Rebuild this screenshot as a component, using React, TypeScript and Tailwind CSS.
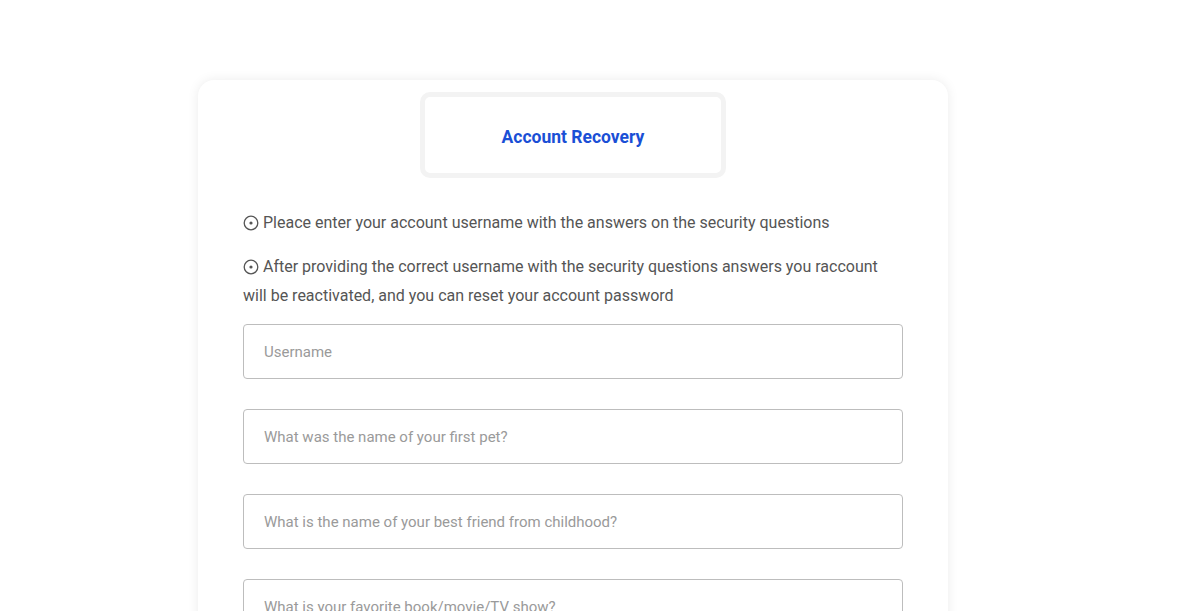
import React from 'react';

const InfoIcon = () => (
  <svg viewBox="0 0 16 16" className="inline-block w-[16px] h-[16px] mr-[4px] -mt-[2px] align-middle" fill="none" stroke="currentColor" strokeWidth="1.3">
    <circle cx="8" cy="8" r="6.8" />
    <circle cx="8" cy="8" r="1.6" fill="currentColor" stroke="none" />
  </svg>
);

const fields = [
  'Username',
  'What was the name of your first pet?',
  'What is the name of your best friend from childhood?',
  'What is your favorite book/movie/TV show?',
  'What city were you born in?',
];

export default function App() {
  return (
    <div className="min-h-screen bg-white pt-[80px] font-['Roboto',sans-serif]">
      <div className="ml-[198px] w-[750px] rounded-[16px] bg-white px-[45px] pt-[12px] pb-[40px] shadow-[0_0_12px_rgba(0,0,0,0.08)]">
        <div className="flex justify-center">
          <div className="flex h-[86px] w-[306px] items-center justify-center rounded-[10px] border-[5px] border-[#f3f3f3] bg-white pt-[5px]">
            <h1 className="text-[17.5px] font-bold text-[#1a4fd6]">Account Recovery</h1>
          </div>
        </div>

        <div className="mt-[30px] text-[16px] leading-[29px] text-[#555]">
          <p className="mb-[15px]">
            <InfoIcon />
            Pleace enter your account username with the answers on the security questions
          </p>
          <p className="mb-[14px]">
            <InfoIcon />
            After providing the correct username with the security questions answers you raccount will be reactivated, and you can reset your account password
          </p>
        </div>

        <form className="flex flex-col gap-[30px]">
          {fields.map((f) => (
            <input
              key={f}
              type="text"
              placeholder={f}
              className="h-[55px] w-full rounded-[4px] border border-[#bdbdbd] px-[20px] text-[15px] text-[#333] placeholder:text-[#9a9a9a] outline-none"
            />
          ))}
        </form>
      </div>
    </div>
  );
}
